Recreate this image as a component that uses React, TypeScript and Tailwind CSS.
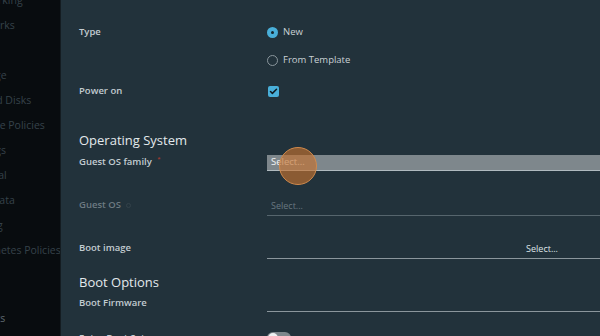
import { Check } from 'lucide-react';

const navItems = [
  { label: 'Networking', top: 'mt-[-6px]', ml: 'ml-[-34px]' },
  { label: 'Networks', top: 'mt-[13px]', ml: 'ml-[-32px]' },
  { label: 'Storage', top: 'mt-[38px]', ml: 'ml-[-31px]' },
  { label: 'Shared Disks', top: 'mt-[13px]', ml: 'ml-[-32px]' },
  { label: 'Storage Policies', top: 'mt-[13px]', ml: 'ml-[-32px]' },
  { label: 'Settings', top: 'mt-[13px]', ml: 'ml-[-33px]' },
  { label: 'General', top: 'mt-[13px]', ml: 'ml-[-32px]' },
  { label: 'Metadata', top: 'mt-[13px]', ml: 'ml-[-32px]' },
  { label: 'Tagging', top: 'mt-[13px]', ml: 'ml-[-35px]' },
  { label: 'Kubernetes Policies', top: 'mt-[13px]', ml: 'ml-[-35px]' },
  { label: 'Events', top: 'mt-[56px]', ml: 'ml-[-27px]' },
];

function Label({ children, dim }: { children: React.ReactNode; dim?: boolean }) {
  return (
    <div className={`text-[9.5px] font-semibold ${dim ? 'text-[#6d7a82]' : 'text-[#c3ccd1]'}`}>
      {children}
    </div>
  );
}

export default function App() {
  return (
    <div
      className="flex w-[600px] h-[336px] overflow-hidden bg-[#22323b]"
      style={{ fontFamily: '"Open Sans", "Noto Sans", Arial, sans-serif' }}
    >
      {/* Left nav (mostly cut off) */}
      <div className="w-[61px] shrink-0 h-full bg-[#080c0f] border-r border-[#141c21] overflow-hidden flex flex-col [&>*]:shrink-0">
        {navItems.map((item) => (
          <div
            key={item.label}
            className={`${item.top} ${item.ml} h-[12px] leading-[12px] whitespace-nowrap text-[10.5px] ${
              item.label === 'Events' ? 'text-[#5f6b73]' : 'text-[#36424a]'
            }`}
          >
            {item.label}
          </div>
        ))}
      </div>

      {/* Main form */}
      <div className="relative flex-1 pl-[18px] flex flex-col [&>*]:shrink-0">
        {/* Type */}
        <div className="mt-[18px] h-[28px] flex items-center">
          <div className="w-[188px]"><Label>Type</Label></div>
          <div className="flex items-center gap-[5px]">
            <span className="w-[11px] h-[11px] rounded-full bg-[#49afd9] flex items-center justify-center">
              <span className="w-[3px] h-[3px] rounded-full bg-[#17242b]" />
            </span>
            <span className="text-[9.5px] text-[#c9d1d5]">New</span>
          </div>
        </div>
        <div className="h-[28px] flex items-center">
          <div className="w-[188px]" />
          <div className="flex items-center gap-[5px]">
            <span className="w-[11px] h-[11px] rounded-full border border-[#8a969c]" />
            <span className="text-[9.5px] text-[#c9d1d5]">From Template</span>
          </div>
        </div>

        {/* Power on */}
        <div className="mt-[3px] h-[28px] flex items-center">
          <div className="w-[188px]"><Label>Power on</Label></div>
          <span className="ml-[1px] w-[11px] h-[11px] rounded-[2px] bg-[#49afd9] flex items-center justify-center">
            <Check className="w-[9px] h-[9px] text-[#0f1a20]" strokeWidth={4} />
          </span>
        </div>

        {/* Operating System */}
        <div className="mt-[25px] h-[22px] flex items-center text-[13px] text-[#e3e9ec]">
          Operating System
        </div>
        <div className="h-[20px] flex items-center">
          <div className="w-[188px]">
            <Label>
              Guest OS family <span className="text-[#b03a2e] text-[6px] align-top ml-[3px]">*</span>
            </Label>
          </div>
          <div className="flex-1 h-[16px] mt-[2px] bg-[#7e878c] border-b border-[#b0babf] flex items-center pl-[4px] text-[9.5px] text-[#f2f5f6]">
            Select...
          </div>
        </div>

        {/* Guest OS */}
        <div className="mt-[22px] h-[22px] flex items-center">
          <div className="w-[188px]">
            <Label dim>
              Guest OS <span className="inline-block ml-[3px] w-[5px] h-[5px] rounded-full border border-[#33424a]" />
            </Label>
          </div>
          <div className="flex-1 h-[18px] mt-[3px] border-b border-[#56656d] flex items-center pl-[4px] text-[9px] text-[#687780]">
            Select...
          </div>
        </div>

        {/* Boot image */}
        <div className="mt-[21px] h-[22px] flex items-center">
          <div className="w-[188px]"><Label>Boot image</Label></div>
          <div className="flex-1 h-[18px] mt-[3px] border-b border-[#8b969c] flex items-center justify-end pr-[42px] text-[9px] text-[#dfe5e8]">
            Select...
          </div>
        </div>

        {/* Boot Options */}
        <div className="mt-[13px] h-[22px] flex items-center text-[13px] text-[#e3e9ec]">
          Boot Options
        </div>
        <div className="h-[18px] flex items-center">
          <div className="w-[188px]"><Label>Boot Firmware</Label></div>
          <div className="flex-1 h-[18px] border-b border-[#8b969c]" />
        </div>

        {/* Enter Boot Setup */}
        <div className="mt-[15px] h-[22px] flex items-center">
          <div className="w-[188px]"><Label>Enter Boot Setup</Label></div>
          <span className="w-[24px] h-[12px] rounded-full bg-[#7d878c] flex items-center pl-[1px]">
            <span className="w-[10px] h-[10px] rounded-full bg-[#eef1f2]" />
          </span>
        </div>

        {/* click indicator */}
        <div className="absolute left-[218px] top-[147px] w-[38px] h-[38px] rounded-full bg-[#c4722f]/65 border border-[#d08a4c]" />
      </div>
    </div>
  );
}
